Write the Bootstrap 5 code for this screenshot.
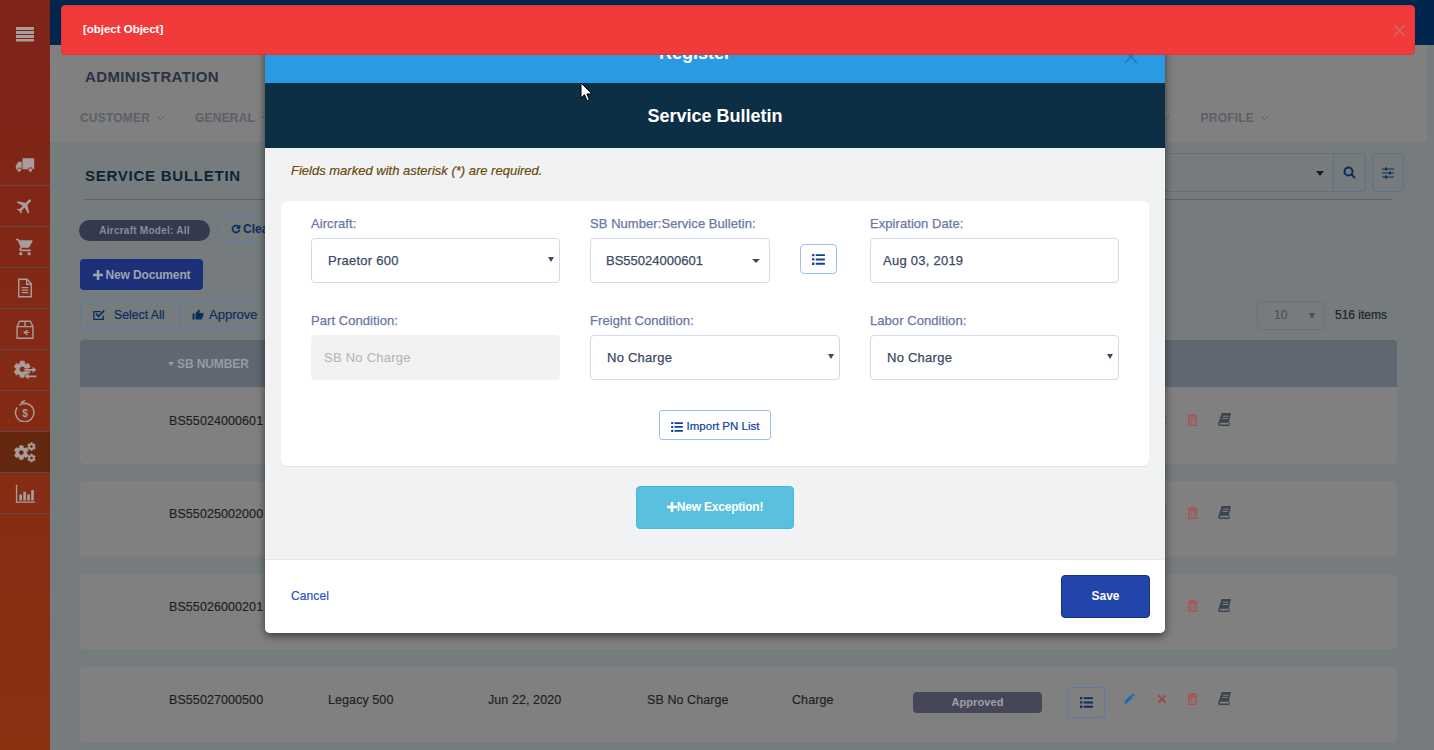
<!DOCTYPE html>
<html lang="en">
<head>
<meta charset="utf-8">
<title>Service Bulletin</title>
<link rel="stylesheet" href="https://cdn.jsdelivr.net/npm/bootstrap@5.3.0/dist/css/bootstrap.min.css">
<style>
html,body{height:750px;overflow:hidden}
body{font-family:"Liberation Sans",Arial,sans-serif;font-size:13px;background:#767c7d;color:#222}
.ico{display:inline-block;fill:currentColor;flex:none}
.shell{height:750px}
.side{width:50px;flex:none;background:linear-gradient(#7d2318,#8a3112);color:#a89d9a}
.side-top{height:145px;padding-top:26px}
.side-item{height:41px;border-bottom:1px solid #5f4a45}
.side-on{background:#62270c}
.main-col{min-width:0}
.topstrip{height:45px;background:#00264d}
.headbox{height:97px;background:#808080;border-bottom:1px solid #74808a;margin-right:7px;padding:22px 0 0 35px}
.headtitle{font-size:15px;font-weight:700;letter-spacing:.36px;color:#2b3244;line-height:20px}
.headnav{margin:21px 0 0 -5px;padding-right:158px;font-size:12px;font-weight:700;color:#5b6068;line-height:20px;letter-spacing:.2px}
.headnav span{display:flex;align-items:center;gap:6px}
.navgap1{margin-left:30px}
.navgap2{margin-left:31px}
.content{padding:0 37px 0 30px}
.titlebar{height:58px;margin:0 5px;border-bottom:1px solid #5e6364;padding-top:11px;color:#0d2435}
.pagetitle{font-size:15px;font-weight:700;letter-spacing:.75px;line-height:32px;margin-top:7px}
.searchbox{width:168px;height:39px;border:1px solid #666f75;border-right:0;border-left:0;position:relative}
.searchbtn{width:33px;height:39px;border:1px solid #5d7290;border-radius:0 4px 4px 0;color:#0b2c5d}
.tunebtn{width:32px;height:39px;border:1px solid #5d7290;border-radius:4px;color:#0b2c5d;margin:0 -12px 0 6px}
.caretdark{width:0;height:0;border:4px solid transparent;border-top:5px solid #1a1d22;border-bottom:0;position:absolute;right:9px;top:17px}
.filterline{margin:20px 0 0 -1px;height:24px}
.chipdark{width:131px;height:21px;border-radius:11px;background:#343a4d;color:#878c98;font-size:10px;font-weight:700;line-height:21px;text-align:center;letter-spacing:.25px}
.chipline{width:80px;height:25px;border:1px solid #5d7aa5;border-radius:13px;color:#0b2c5d;font-size:12px;font-weight:700;margin-left:6px;padding-left:13px;margin-top:-4px;display:flex;align-items:center;gap:1px}
.newdoc{width:123px;height:31px;background:#1b3078;color:#9ea3ad;border:0;border-radius:4px;font-size:12px;font-weight:700;padding:0;margin-top:15px;display:flex;align-items:center;justify-content:center;gap:3px;letter-spacing:-.15px}
.toolline{margin-top:10px;height:30px}
.toolgrp{border:1px solid #5d7aa5;border-radius:4px;height:30px;width:260px;color:#0b2c5d;font-size:12.25px;-webkit-text-stroke:.2px}
.toolgrp>div{height:100%;display:flex;align-items:center}
.tool1{width:100px;padding-left:11px;gap:8px;border-right:1px solid #5d7aa5}
.tool2{padding-left:11px;gap:5px;font-size:13px}
.pagesize{width:68px;height:29px;border:1px solid #6e7174;border-radius:4px;color:#4e5257;font-size:12px;line-height:27px;padding-left:16px;position:relative;-webkit-text-stroke:.2px}
.pagesize i{position:absolute;right:9px;top:11px;width:0;height:0;border:3px solid transparent;border-top:6px solid #4a4e55;border-bottom:0}
.itemcount{font-size:12px;color:#202225;margin:0 10px 0 10px;-webkit-text-stroke:.2px}
.thead-box{height:47px;background:#5f6771;margin-top:10px;border-radius:4px 4px 0 0;color:#979ba1;font-size:12px;font-weight:700;padding-left:88px;display:flex;align-items:center;gap:3px;letter-spacing:-.1px}
.caretup{width:0;height:0;border:3.500px solid transparent;border-top:4px solid #979ba1;border-bottom:0}
.rowbox{height:77px;background:#808080;border-bottom:1px solid #74797c;border-radius:5px;margin-bottom:16px;display:grid;grid-template-columns:159px 160px 159px 145px 121px 154px 38px 87px;padding:24px 0 0 89px;color:#1e1e1e;font-size:12.5px;line-height:18px;letter-spacing:.08px;-webkit-text-stroke:.15px}
.rowfirst{height:78px;border-radius:0 0 5px 5px;padding-top:25px}
.statuspill{width:129px;height:21px;background:#454759;color:#a0a0a4;font-size:11px;font-weight:700;border-radius:4px;text-align:center;line-height:21px;margin-top:1px;-webkit-text-stroke:0}
.listbtn{width:38px;height:31px;border:1px solid #5d7aa5;border-radius:4px;color:#0b2c5d;display:flex;align-items:center;justify-content:center;margin-top:-4px}
.actions{position:relative}
.act{position:absolute;top:-2px}
.p-pen{left:18px}.p-x{left:52px}.p-tr{left:82px}.p-bk{left:113px}
.c-blue{color:#1769b5}.c-red1{color:#a84242}.c-red2{color:#ad4e50}.c-book{color:#3b4450}
.dlg{position:absolute;left:265px;top:25px;width:900px;height:608px;border-radius:0 0 5px 5px;box-shadow:0 3px 9px rgba(0,0,0,.55);background:#f1f2f4;z-index:10;overflow:hidden}
.dlg-blue{height:58px;background:#2a9be3;color:#fff;font-size:18px;font-weight:700;padding:15px 40px 0 0;position:relative;line-height:26px}
.dlg-x{position:absolute;right:27px;top:25px;color:#1878b8}
.dlg-dark{height:65px;background:#0d2f45;color:#fff;font-size:18px;font-weight:700;line-height:66px}
.dlg-body{height:411px;padding:0 16px}
.reqnote{font-size:13px;font-style:italic;color:#6b4a0a;height:53px;line-height:46px;padding-left:10px;-webkit-text-stroke:.2px}
.formcard{height:265px;background:#fff;border-radius:6px;box-shadow:0 1px 1px rgba(0,0,0,.06);padding:14px 30px 0}
.formgrid{display:grid;grid-template-columns:repeat(3,1fr);column-gap:30px;row-gap:29px}
.fldlabel{font-size:13px;color:#6b77a5;line-height:18px;margin-bottom:5px;display:block;letter-spacing:.06px;-webkit-text-stroke:.25px}
.fld{height:45px;border:1px solid #d4dae6;border-radius:4px;font-family:"Liberation Sans",Arial,sans-serif;font-size:13px;color:#3c4a63;letter-spacing:.25px;background:#fff;width:100%;-webkit-text-stroke:.25px}
select.fld{padding:0 16px;appearance:none;-webkit-appearance:none}
input.fld{padding-left:12px;outline:0}
.selwrap{position:relative}
.selwrap i{position:absolute;right:6px;top:19px;width:0;height:0;border:3px solid transparent;border-top:5px solid #3c4a63;border-bottom:0}
.fld-off{background:#f2f2f2;border-color:#f2f2f2;color:#b5b7ba;padding-left:12px;display:flex;align-items:center;-webkit-text-stroke:.1px}
.fauxsel{width:180px;padding-left:15px;display:flex;align-items:center;position:relative;letter-spacing:0}
.fauxsel i{position:absolute;right:9px;top:20px;width:0;height:0;border:4px solid transparent;border-top:4px solid #3c4a63;border-bottom:0}
.sblist{width:37px;height:30px;border:1px solid #9fc0ee;border-radius:4px;color:#123f9e;background:#fff;margin:6px 3px 0 30px;display:flex;align-items:center;justify-content:center}
.importbtn{width:112px;height:30px;border:1px solid #9fc0ee;border-radius:3px;background:#fff;color:#123f9e;font-size:11.5px;padding:3px 0 0;display:flex;align-items:center;justify-content:center;gap:4px;-webkit-text-stroke:.2px}
.importwrap{margin-top:30px}
.exceptbtn{width:158px;height:43px;background:#5bc0de;border:1px solid #46b8da;border-radius:4px;color:#fff;font-size:12px;font-weight:700;padding:0 0 2px;margin-top:20px;display:flex;align-items:center;justify-content:center;letter-spacing:-.2px}
.dlg-foot{height:74px;background:#fff;border-top:1px solid #e6e6e6;padding:0 15px 0 26px}
.cancellink{color:#2b50c8;font-size:12px;text-decoration:none;margin-bottom:2px;letter-spacing:.1px;-webkit-text-stroke:.2px}
.savebtn{width:89px;height:43px;background:#2145ab;border:1px solid #14307f;border-radius:4px;color:#fff;font-size:12px;font-weight:700;padding:0 0 2px}
.toastbar{position:absolute;left:61px;top:5px;width:1354px;height:50px;background:#f13b3b;border:1px solid #de3636;border-radius:4px;color:#fff;font-size:11.5px;font-weight:700;z-index:20;padding:0 9px 0 21px;letter-spacing:-.02px}
.toastx{color:#cf6a6a}
.mousept{position:absolute;left:580px;top:82px;z-index:30}
</style>
</head>
<body>
<svg width="0" height="0" class="position-absolute">
<defs>
<path id="p-gear" stroke="currentColor" stroke-width="1" d="M19.14 12.94c.04-.3.06-.61.06-.94 0-.32-.02-.64-.07-.94l2.03-1.58a.49.49 0 0 0 .12-.61l-1.92-3.32a.488.488 0 0 0-.59-.22l-2.39.96c-.5-.38-1.03-.7-1.62-.94l-.36-2.54a.484.484 0 0 0-.48-.41h-3.84c-.24 0-.43.17-.47.41l-.36 2.54c-.59.24-1.13.57-1.62.94l-2.39-.96c-.22-.08-.47 0-.59.22L2.74 8.87c-.12.21-.08.47.12.61l2.03 1.58c-.05.3-.09.63-.09.94s.02.64.07.94l-2.03 1.58a.49.49 0 0 0-.12.61l1.92 3.32c.12.22.37.29.59.22l2.39-.96c.5.38 1.03.7 1.62.94l.36 2.54c.05.24.24.41.48.41h3.84c.24 0 .44-.17.47-.41l.36-2.54c.59-.24 1.13-.56 1.62-.94l2.39.96c.22.08.47 0 .59-.22l1.92-3.32c.12-.22.07-.47-.12-.61l-2.01-1.58zM12 15.6c-1.98 0-3.6-1.62-3.6-3.6s1.62-3.6 3.6-3.6 3.6 1.62 3.6 3.6-1.62 3.6-3.6 3.6z"/>
<symbol id="i-gearswap" viewBox="0 0 24 20"><use href="#p-gear" transform="scale(.84) translate(-1 -1)"/><path d="M11.500 9h8V6.800l4 3-4 3v-2h-8zM23.500 15.500h-8v-2.200l-4 3 4 3v-2h8z" stroke="#7d2a16" stroke-width=".9" paint-order="stroke"/></symbol>
<symbol id="i-gears" viewBox="0 0 24 22"><use href="#p-gear" transform="translate(-1.500 2) scale(.76)"/><use href="#p-gear" transform="translate(13 -.5) scale(.44)"/><use href="#p-gear" transform="translate(13 11.500) scale(.44)"/></symbol>
<symbol id="i-truck" viewBox="0 0 24 24"><path d="M9 4h14v13h-1.600a3 3 0 0 0-5.800 0H9zM8 8v9H7.900a3 3 0 0 0-5.600 0H1v-4l3-5z"/><circle cx="5" cy="18" r="2.200"/><circle cx="18.500" cy="18" r="2.200"/></symbol>
<symbol id="i-plane" viewBox="0 0 24 24"><path transform="rotate(45 12 12)" d="M21 16v-2l-8-5V3.500c0-.83-.67-1.500-1.500-1.500S10 2.670 10 3.500V9l-8 5v2l8-2.500V19l-2 1.500V22l3.500-1 3.500 1v-1.500L13 19v-5.500l8 2.500z"/></symbol>
<symbol id="i-cart" viewBox="0 0 24 24"><path d="M7 18c-1.100 0-1.990.9-1.990 2S5.900 22 7 22s2-.9 2-2-.9-2-2-2zM1 2v2h2l3.600 7.590-1.350 2.450c-.16.28-.25.61-.25.96 0 1.100.9 2 2 2h12v-2H7.420c-.14 0-.25-.11-.25-.25l.03-.12.9-1.630h7.450c.75 0 1.410-.41 1.750-1.030l3.580-6.490A1 1 0 0 0 20.010 4H5.210l-.94-2H1zm16 16c-1.100 0-1.990.9-1.990 2s.89 2 1.990 2 2-.9 2-2-.9-2-2-2z"/></symbol>
<symbol id="i-file" viewBox="0 0 24 24"><g fill="none" stroke="currentColor" stroke-width="1.700"><path d="M4.500 1.500h10l5 5.500v15.500h-15zM14 1.500V7.500h5.500"/><path d="M8 11.500h8M8 14.500h8M8 17.500h8"/></g></symbol>
<symbol id="i-box" viewBox="0 0 24 24"><g fill="none" stroke="currentColor" stroke-width="1.700"><path d="M2.500 8.500h19v14h-19zM2.500 8.500l3-6.500h13l3 6.500M12 2v6.500"/><path d="M15 12.500l-4 3 4 3M11 15.500h6" stroke-width="1.500"/></g></symbol>
<symbol id="i-dollar" viewBox="0 0 24 24"><g fill="none" stroke="currentColor" stroke-width="1.600"><path d="M6 5.500A10 10 0 1 1 3.500 8M12 4.500L8.500 2.500 12 .5"/></g><text x="12" y="18" font-size="11" font-weight="700" text-anchor="middle" font-family="Liberation Sans" fill="currentColor">$</text></symbol>
<symbol id="i-chart" viewBox="0 0 24 24"><path d="M1 2h1.500v19H23v1.500H1z"/><path d="M5 13h3v7H5zM9.500 10h3v10h-3zM14 13h3v7h-3zM18.500 8h3v12h-3z"/></symbol>
<symbol id="i-plus" viewBox="0 0 12 12"><path d="M4.500 0h3v4.500H12v3H7.500V12h-3V7.500H0v-3h4.500z"/></symbol>
<symbol id="i-list" viewBox="0 0 14 12"><path d="M0 0h2.500v2.500H0zM4 .2h10v2.100H4zM0 4.700h2.500v2.500H0zM4 4.900h10V7H4zM0 9.400h2.500v2.500H0zM4 9.600h10v2.100H4z"/></symbol>
<symbol id="i-refresh" viewBox="0 0 24 24"><path d="M17.650 6.350A7.958 7.958 0 0 0 12 4c-4.420 0-7.990 3.580-7.990 8s3.570 8 7.990 8c3.730 0 6.840-2.550 7.730-6h-2.080A5.990 5.990 0 0 1 12 18c-3.310 0-6-2.690-6-6s2.690-6 6-6c1.660 0 3.140.69 4.220 1.780L13 11h7V4l-2.350 2.350z" stroke="currentColor" stroke-width="1.500"/></symbol>
<symbol id="i-check" viewBox="0 0 16 14"><path d="M13 8v4H2V3h8" fill="none" stroke="currentColor" stroke-width="1.500"/><path d="M4.500 5.500L7.500 8.500 14 2" fill="none" stroke="currentColor" stroke-width="2"/></symbol>
<symbol id="i-thumb" viewBox="0 0 24 24"><path d="M1 21h4V9H1v12zm22-11c0-1.100-.9-2-2-2h-6.310l.95-4.570.03-.32c0-.41-.17-.79-.44-1.060L14.170 1 7.590 7.590C7.220 7.950 7 8.450 7 9v10c0 1.100.9 2 2 2h9c.83 0 1.540-.5 1.840-1.220l3.020-7.050c.09-.23.14-.47.14-.73v-2z"/></symbol>
<symbol id="i-pencil" viewBox="0 0 24 24"><path d="M3 17.250V21h3.750L17.810 9.940l-3.750-3.750L3 17.250zM20.710 7.040a1 1 0 0 0 0-1.410l-2.340-2.340a1 1 0 0 0-1.410 0l-1.830 1.830 3.750 3.750 1.830-1.830z"/></symbol>
<symbol id="i-x" viewBox="0 0 12 12"><path d="M2.500 1L6 4.500 9.500 1 11 2.500 7.500 6 11 9.500 9.500 11 6 7.500 2.500 11 1 9.500 4.500 6 1 2.500z"/></symbol>
<symbol id="i-trash" viewBox="0 0 12 14"><path d="M4 0h4l.8 1.500H12V3H0V1.500h3.200zM1 3.500h10V14H1zm1.500 1.500v7.500h7V5zM4 6h1v5.500H4zm3 0h1v5.500H7z" fill-rule="evenodd"/></symbol>
<symbol id="i-book" viewBox="0 0 14 14"><path d="M4 0h10l-2.500 10.500H3c-.9 0-1.200.6-1.200 1s.3 1 1.200 1h8.500l.7-2.500.8.300L12.200 14H2.500C1 14 0 13 .2 11.500zM5.500 3l-.2 1h6l.2-1zm-.6 2.500l-.2 1h6l.2-1z" fill-rule="evenodd"/></symbol>
</defs>
</svg>

<div class="shell d-flex position-relative">
  <nav class="side d-flex flex-column">
    <div class="side-top d-flex justify-content-center">
      <svg class="ico" width="20" height="16" viewBox="0 0 20 16"><path d="M1 1h18v3H1zM1 5h18v3H1zM1 9h18v3H1zM1 13h18v2.500H1z"/></svg>
    </div>
    <div class="side-item d-flex align-items-center justify-content-center"><svg class="ico" width="20" height="20"><use href="#i-truck"/></svg></div>
    <div class="side-item d-flex align-items-center justify-content-center"><svg class="ico" width="20" height="20"><use href="#i-plane"/></svg></div>
    <div class="side-item d-flex align-items-center justify-content-center"><svg class="ico" width="20" height="20"><use href="#i-cart"/></svg></div>
    <div class="side-item d-flex align-items-center justify-content-center"><svg class="ico" width="20" height="20"><use href="#i-file"/></svg></div>
    <div class="side-item d-flex align-items-center justify-content-center"><svg class="ico" width="20" height="21"><use href="#i-box"/></svg></div>
    <div class="side-item d-flex align-items-center justify-content-center"><svg class="ico" width="24" height="20"><use href="#i-gearswap"/></svg></div>
    <div class="side-item d-flex align-items-center justify-content-center"><svg class="ico" width="22" height="22"><use href="#i-dollar"/></svg></div>
    <div class="side-item side-on d-flex align-items-center justify-content-center"><svg class="ico" width="23" height="21"><use href="#i-gears"/></svg></div>
    <div class="side-item d-flex align-items-center justify-content-center"><svg class="ico" width="21" height="21"><use href="#i-chart"/></svg></div>
  </nav>

  <div class="main-col flex-grow-1">
    <div class="topstrip"></div>
    <div class="headbox">
      <div class="headtitle">ADMINISTRATION</div>
      <div class="headnav d-flex">
        <span>CUSTOMER <svg width="9" height="6" viewBox="0 0 9 6"><path d="M1 1l3.500 3.500L8 1" fill="none" stroke="currentColor"/></svg></span>
        <span class="navgap1">GENERAL <svg width="9" height="6" viewBox="0 0 9 6"><path d="M1 1l3.500 3.500L8 1" fill="none" stroke="currentColor"/></svg></span>
        <span class="ms-auto">REPORTS <svg width="9" height="6" viewBox="0 0 9 6"><path d="M1 1l3.500 3.500L8 1" fill="none" stroke="currentColor"/></svg></span>
        <span class="navgap2">PROFILE <svg width="9" height="6" viewBox="0 0 9 6"><path d="M1 1l3.500 3.500L8 1" fill="none" stroke="currentColor"/></svg></span>
      </div>
    </div>
    <div class="content">
      <div class="titlebar d-flex align-items-start">
        <div class="pagetitle me-auto">SERVICE BULLETIN</div>
        <div class="searchbox"><i class="caretdark"></i></div>
        <div class="searchbtn d-flex align-items-center justify-content-center"><svg width="13" height="13" viewBox="0 0 13 13"><circle cx="5.500" cy="5.500" r="4" fill="none" stroke="currentColor" stroke-width="2"/><path d="M8.500 8.500L12 12" stroke="currentColor" stroke-width="2"/></svg></div>
        <div class="tunebtn d-flex align-items-center justify-content-center"><svg width="12" height="12" viewBox="0 0 12 12" fill="currentColor"><path d="M0 1.500h12v1H0zM0 5.500h12v1H0zM0 9.500h12v1H0zM3 .5h2v3H3zM7 4.500h2v3H7zM3 8.500h2v3H3z"/></svg></div>
      </div>
      <div class="filterline d-flex">
        <div class="chipdark">Aircraft Model: All</div>
        <div class="chipline"><svg class="ico" width="12" height="12"><use href="#i-refresh"/></svg>Clear</div>
      </div>
      <button class="newdoc" type="button"><svg class="ico" width="10" height="10"><use href="#i-plus"/></svg> New Document</button>
      <div class="toolline d-flex align-items-center">
        <div class="toolgrp d-flex">
          <div class="tool1"><svg class="ico" width="14" height="12"><use href="#i-check"/></svg>Select All</div>
          <div class="tool2"><svg class="ico" width="12" height="12"><use href="#i-thumb"/></svg>Approve</div>
        </div>
        <div class="pagesize ms-auto">10<i></i></div>
        <div class="itemcount">516 items</div>
      </div>
      <div class="thead-box"><i class="caretup"></i>SB NUMBER</div>

      <div class="rowbox rowfirst">
        <div>BS55024000601</div><div></div><div></div><div></div><div></div><div></div><div></div>
        <div class="actions"><span class="act p-x c-red1"><svg class="ico" width="10" height="10"><use href="#i-x"/></svg></span><span class="act p-tr c-red2"><svg class="ico" width="11" height="12"><use href="#i-trash"/></svg></span><span class="act p-bk c-book"><svg class="ico" width="13" height="13"><use href="#i-book"/></svg></span></div>
      </div>
      <div class="rowbox">
        <div>BS55025002000</div><div></div><div></div><div></div><div></div><div></div><div></div>
        <div class="actions"><span class="act p-x c-red1"><svg class="ico" width="10" height="10"><use href="#i-x"/></svg></span><span class="act p-tr c-red2"><svg class="ico" width="11" height="12"><use href="#i-trash"/></svg></span><span class="act p-bk c-book"><svg class="ico" width="13" height="13"><use href="#i-book"/></svg></span></div>
      </div>
      <div class="rowbox">
        <div>BS55026000201</div><div></div><div></div><div></div><div></div><div></div><div></div>
        <div class="actions"><span class="act p-x c-red1"><svg class="ico" width="10" height="10"><use href="#i-x"/></svg></span><span class="act p-tr c-red2"><svg class="ico" width="11" height="12"><use href="#i-trash"/></svg></span><span class="act p-bk c-book"><svg class="ico" width="13" height="13"><use href="#i-book"/></svg></span></div>
      </div>
      <div class="rowbox">
        <div>BS55027000500</div><div>Legacy 500</div><div>Jun 22, 2020</div><div>SB No Charge</div><div>Charge</div>
        <div><div class="statuspill">Approved</div></div>
        <div><div class="listbtn"><svg class="ico" width="13" height="11"><use href="#i-list"/></svg></div></div>
        <div class="actions">
          <span class="act p-pen c-blue"><svg class="ico" width="13" height="13"><use href="#i-pencil"/></svg></span>
          <span class="act p-x c-red1"><svg class="ico" width="10" height="10"><use href="#i-x"/></svg></span>
          <span class="act p-tr c-red2"><svg class="ico" width="11" height="12"><use href="#i-trash"/></svg></span>
          <span class="act p-bk c-book"><svg class="ico" width="13" height="13"><use href="#i-book"/></svg></span>
        </div>
      </div>
    </div>
  </div>

  <section class="dlg" role="dialog">
    <div class="dlg-blue text-center">Register<svg class="dlg-x" width="14" height="14" viewBox="0 0 14 14"><path d="M1 1l12 12M13 1L1 13" stroke="currentColor" stroke-width="1.500"/></svg></div>
    <div class="dlg-dark text-center">Service Bulletin</div>
    <div class="dlg-body">
      <div class="reqnote">Fields marked with asterisk (*) are required.</div>
      <div class="formcard">
        <div class="formgrid">
          <div><label class="fldlabel">Aircraft:</label><div class="selwrap"><select class="fld"><option>Praetor 600</option></select><i></i></div></div>
          <div><label class="fldlabel">SB Number:Service Bulletin:</label>
            <div class="d-flex align-items-start"><div class="fld fauxsel">BS55024000601<i></i></div><div class="sblist"><svg class="ico" width="13" height="11"><use href="#i-list"/></svg></div></div>
          </div>
          <div><label class="fldlabel">Expiration Date:</label><input class="fld" value="Aug 03, 2019"></div>
          <div><label class="fldlabel">Part Condition:</label><div class="fld fld-off">SB No Charge</div></div>
          <div><label class="fldlabel">Freight Condition:</label><div class="selwrap"><select class="fld"><option>No Charge</option></select><i></i></div></div>
          <div><label class="fldlabel">Labor Condition:</label><div class="selwrap"><select class="fld"><option>No Charge</option></select><i></i></div></div>
        </div>
        <div class="importwrap d-flex justify-content-center">
          <button class="importbtn" type="button"><svg class="ico" width="12" height="10"><use href="#i-list"/></svg>Import PN List</button>
        </div>
      </div>
      <div class="d-flex justify-content-center">
        <button class="exceptbtn" type="button"><svg class="ico" width="10" height="10"><use href="#i-plus"/></svg>New Exception!</button>
      </div>
    </div>
    <div class="dlg-foot d-flex align-items-center justify-content-between">
      <a class="cancellink" href="#">Cancel</a>
      <button class="savebtn" type="button">Save</button>
    </div>
  </section>

  <div class="toastbar d-flex align-items-center justify-content-between" role="alert">
    <span>[object Object]</span>
    <svg class="toastx" width="11" height="11" viewBox="0 0 10 10"><path d="M.5.5l9 9M9.500.5l-9 9" stroke="currentColor" stroke-width="1.200"/></svg>
  </div>

  <svg class="mousept" width="13" height="20" viewBox="0 0 13 20"><path d="M1 1v15l3.500-3.300 2.500 6 2.400-1-2.500-5.800H12z" fill="#fff" stroke="#000"/></svg>
</div>
</body>
</html>
